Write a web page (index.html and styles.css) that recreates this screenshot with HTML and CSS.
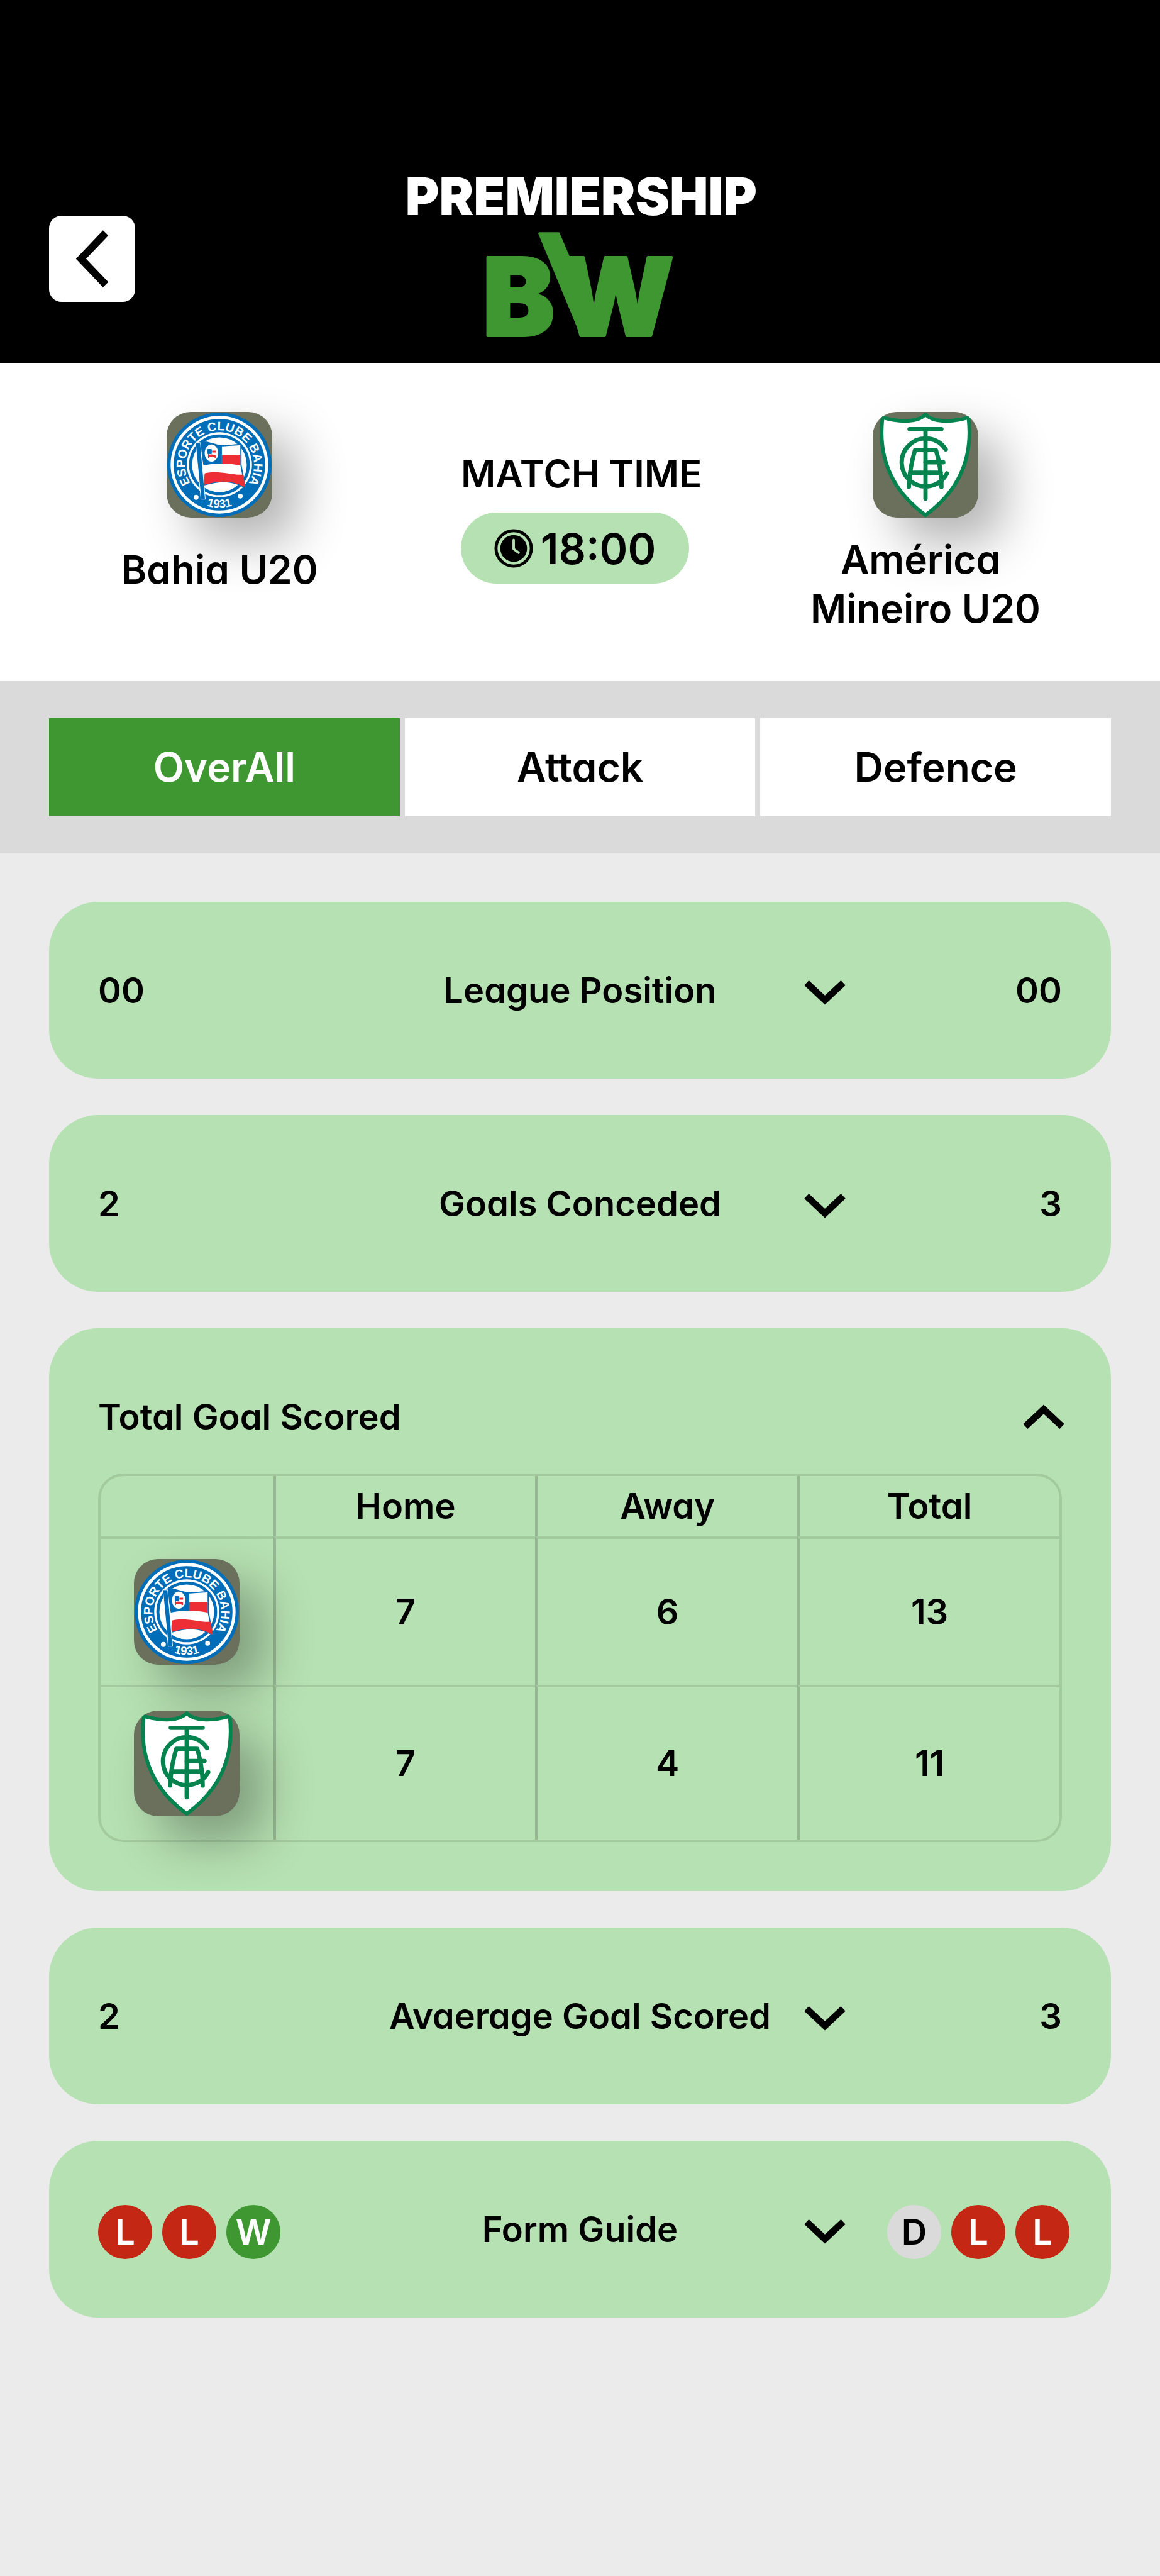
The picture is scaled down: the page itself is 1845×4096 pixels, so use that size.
FILE: index.html
```html
<!DOCTYPE html>
<html lang="en">
<head>
<meta charset="utf-8">
<meta name="viewport" content="width=device-width, initial-scale=1">
<title>Bahia U20 – América Mineiro U20</title>
<link rel="stylesheet" href="styles.css">
</head>
<body>
<svg class="sprite" aria-hidden="true">
  <symbol id="chevron" viewBox="0 0 68 40">
    <path d="M4 4L34 32L64 4" fill="none" stroke="currentColor" stroke-width="11"/>
  </symbol>
</svg>

<header class="header">
  <button class="back" type="button" aria-label="Back">
    <svg class="back__icon" viewBox="0 0 140 140" aria-hidden="true"><path d="M92 28L52 70L92 112" fill="none" stroke="#000" stroke-width="12"/></svg>
  </button>
  <svg class="logo" viewBox="646 268 600 324" role="img" aria-label="Premiership BW">
    <text class="logo__name" x="948" y="351" text-anchor="middle">PREMIERSHIP</text>
    <g class="logo__mark">
      <text x="787" y="548">B</text>
      <text x="909" y="548">W</text>
      <path d="M880 381H911L966 510L949 548Z"/>
    </g>
  </svg>
</header>

<main>
  <section class="match">
    <div class="team team--single">
      <svg class="crest" viewBox="0 0 172 172" role="img" aria-label="Bahia crest">
        <g id="bahia">
          <rect width="172" height="172" fill="#6b705c"/>
          <circle cx="86" cy="86" r="85" fill="#006db8"/>
          <circle cx="86" cy="86" r="77" fill="none" stroke="#fff" stroke-width="5"/>
          <circle cx="86" cy="86" r="53" fill="#fff"/>
          <circle cx="86" cy="86" r="47" fill="none" stroke="#006db8" stroke-width="5"/>
          <path id="ring-top" d="M86 142A56 56 0 1 1 86.1 142" fill="none"/>
          <path id="ring-bottom" d="M16 86A70 70 0 0 0 156 86" fill="none"/>
          <text class="crest-text" text-anchor="middle" font-size="20"><textPath href="#ring-top" startOffset="50%">ESPORTE CLUBE BAHIA</textPath></text>
          <text class="crest-text" text-anchor="middle" font-size="19"><textPath href="#ring-bottom" startOffset="50%">1931</textPath></text>
          <circle cx="48" cy="139" r="4" fill="#fff"/>
          <circle cx="120" cy="137" r="4" fill="#fff"/>
          <path d="M54 50C68 46 78 56 92 55S112 54 121 53L121 86L128 123C104 110 86 112 60 119Z" fill="#fff" stroke="#006db8" stroke-width="2"/>
          <path d="M54 50C68 46 78 56 90 55V84Q74 84 60 87Z" fill="#006db8"/>
          <path d="M90 70H120L120 87Q104 84 90 84Z" fill="#ee2e35"/>
          <path d="M62 100C84 94 104 103 125 102L128 123C104 110 86 112 60 119Z" fill="#ee2e35"/>
          <ellipse cx="73" cy="67" rx="11" ry="14" fill="#fff"/>
          <path d="M67 61h6v7h-6zM68 61v14" fill="#006db8" stroke="#006db8" stroke-width="1"/>
          <path d="M74 63h6v3h-6zM68 70q6-2 12 1v4q-6-3-12-1z" fill="#ee2e35"/>
          <path d="M47 50H55L63 142H56Z" fill="#006db8" stroke="#fff" stroke-width="1"/>
        </g>
      </svg>
      <span class="team__name">Bahia U20</span>
    </div>
    <div class="kickoff">
      <span class="kickoff__label">MATCH TIME</span>
      <span class="kickoff__time">
        <svg class="clock" viewBox="0 0 64 64" aria-hidden="true">
          <circle cx="32" cy="32" r="29" fill="none" stroke="#000" stroke-width="5"/>
          <circle cx="32" cy="32" r="22" fill="#000"/>
          <path d="M32 18V33L40 39" fill="none" stroke="#b6e1b2" stroke-width="4" stroke-linecap="round" stroke-linejoin="round"/>
        </svg>
        <time>18:00</time>
      </span>
    </div>
    <div class="team">
      <svg class="crest" viewBox="0 0 172 172" role="img" aria-label="América Mineiro crest">
        <g id="america">
          <rect width="172" height="172" fill="#6b705c"/>
          <path d="M86 4C97 16 125 18 156 9C162 60 152 120 86 168C20 120 10 60 16 9C47 18 75 16 86 4Z" fill="#fff" stroke="#05834f" stroke-width="6" stroke-linejoin="round"/>
          <g fill="none" stroke="#05834f" stroke-width="7" stroke-linecap="round" stroke-linejoin="round">
            <path d="M60 28H112M86 28V141"/>
            <path d="M119 61A39 39 0 1 0 121 100"/>
            <path d="M59 122Q60 92 69 62H103Q112 92 112 122M62 99H111M86 82H115"/>
          </g>
        </g>
      </svg>
      <span class="team__name">América&nbsp;<br>Mineiro U20</span>
    </div>
  </section>

  <nav class="tabs">
    <button class="tab tab--active" type="button">OverAll</button>
    <button class="tab" type="button">Attack</button>
    <button class="tab" type="button">Defence</button>
  </nav>

  <div class="cards">
    <section class="card row">
      <span>00</span>
      <h2 class="row__title">League Position</h2>
      <button class="toggle" type="button" aria-label="Show League Position"><svg class="chevron"><use href="#chevron"/></svg></button>
      <span class="row__away">00</span>
    </section>

    <section class="card row">
      <span>2</span>
      <h2 class="row__title">Goals Conceded</h2>
      <button class="toggle" type="button" aria-label="Show Goals Conceded"><svg class="chevron"><use href="#chevron"/></svg></button>
      <span class="row__away">3</span>
    </section>

    <section class="card">
      <div class="open-head">
        <h2 class="open-head__title">Total Goal Scored</h2>
        <button class="toggle toggle--open" type="button" aria-label="Hide Total Goal Scored"><svg class="chevron chevron--up"><use href="#chevron"/></svg></button>
      </div>
      <table class="goals">
        <colgroup><col class="goals__team"><col><col><col></colgroup>
        <thead>
          <tr><td></td><th scope="col">Home</th><th scope="col">Away</th><th scope="col">Total</th></tr>
        </thead>
        <tbody>
          <tr>
            <th scope="row"><svg class="crest" viewBox="0 0 172 172" role="img" aria-label="Bahia crest"><use href="#bahia"/></svg></th>
            <td>7</td><td>6</td><td>13</td>
          </tr>
          <tr>
            <th scope="row"><svg class="crest" viewBox="0 0 172 172" role="img" aria-label="América Mineiro crest"><use href="#america"/></svg></th>
            <td>7</td><td>4</td><td>11</td>
          </tr>
        </tbody>
      </table>
    </section>

    <section class="card row">
      <span>2</span>
      <h2 class="row__title">Avaerage Goal Scored</h2>
      <button class="toggle" type="button" aria-label="Show Avaerage Goal Scored"><svg class="chevron"><use href="#chevron"/></svg></button>
      <span class="row__away">3</span>
    </section>

    <section class="card row">
      <div class="form">
        <span class="result result--loss">L</span>
        <span class="result result--loss">L</span>
        <span class="result result--win">W</span>
      </div>
      <h2 class="row__title">Form Guide</h2>
      <button class="toggle" type="button" aria-label="Show Form Guide"><svg class="chevron"><use href="#chevron"/></svg></button>
      <div class="form form--away">
        <span class="result">D</span>
        <span class="result result--loss">L</span>
        <span class="result result--loss">L</span>
      </div>
    </section>
  </div>
</main>
</body>
</html>
```
FILE: styles.css
```css
:root {
  --green: #3f9732;
  --mint: #b6e1b2;
  --grey: #dadada;
  --red: #c42713;
  --line: rgba(0, 0, 0, 0.1);
}

* {
  box-sizing: border-box;
}

body {
  margin: 0;
  min-height: 100vh;
  background: #ebebeb;
  color: #000;
  font-family: Inter, "Liberation Sans", sans-serif;
  font-feature-settings: "cv11";
  font-weight: 600;
  font-size: 56px;
  line-height: 78px;
}

button {
  margin: 0;
  padding: 0;
  border: 0;
  background: none;
  color: inherit;
  font: inherit;
  font-feature-settings: inherit;
  cursor: pointer;
}

h2 {
  margin: 0;
  font: inherit;
}

svg {
  display: block;
}

.sprite {
  position: absolute;
  width: 0;
  height: 0;
}

/* Header */
.header {
  display: grid;
  grid-template-columns: 1fr auto 1fr;
  align-items: start;
  padding: 261px 78px 0;
  background: #000;
}

.back {
  width: 137px;
  height: 137px;
  margin-top: 82px;
  border-radius: 20px;
  background: #fff;
}

.back__icon {
  width: 137px;
  height: 137px;
}

.logo {
  width: 585px;
  height: 316px;
}

.logo__name {
  font-size: 84px;
  font-weight: 900;
  fill: #fff;
}

.logo__mark {
  font-size: 176px;
  font-weight: 900;
  fill: var(--green);
  stroke: var(--green);
  stroke-width: 4px;
  stroke-linejoin: round;
}

/* Match summary */
.match {
  display: grid;
  grid-template-columns: minmax(0, 698fr) minmax(0, 401fr) minmax(0, 746fr);
  padding: 78px 0 76px;
  background: #fff;
  font-size: 62px;
}

.team {
  display: flex;
  flex-direction: column;
  align-items: center;
  gap: 28px;
  text-align: center;
}

.team--single {
  gap: 44px;
}

.crest {
  width: 168px;
  height: 168px;
  border-radius: 38px;
  box-shadow: 39px 39px 78px rgba(0, 0, 0, 0.3);
}

.crest-text {
  font-family: "Liberation Sans", sans-serif;
  font-weight: 700;
  fill: #fff;
}

.kickoff {
  display: flex;
  flex-direction: column;
  align-items: flex-start;
  gap: 23px;
  padding: 59px 0 0 35px;
  white-space: nowrap;
}

.kickoff__label {
  font-size: 60px;
}

.kickoff__time {
  display: flex;
  align-items: center;
  justify-content: center;
  gap: 12px;
  width: 363px;
  height: 113px;
  border-radius: 57px;
  background: var(--mint);
  font-size: 68px;
}

.clock {
  width: 62px;
  height: 62px;
}

/* Tabs */
.tabs {
  display: flex;
  gap: 8px;
  padding: 59px 78px 58px;
  background: var(--grey);
}

.tab {
  flex: 1;
  padding: 39px 0;
  background: #fff;
  font-size: 64px;
}

.tab--active {
  background: var(--green);
  color: #fff;
}

/* Cards */
.cards {
  display: flex;
  flex-direction: column;
  gap: 58px;
  padding: 78px;
}

.card {
  padding: 78px;
  border-radius: 78px;
  background: var(--mint);
}

.row {
  display: grid;
  grid-template-columns: minmax(0, 423fr) minmax(0, 687fr) minmax(0, 92fr) minmax(0, 331fr);
  grid-template-rows: 125px;
  align-items: center;
}

.row__title {
  text-align: center;
  white-space: nowrap;
}

.row__away {
  text-align: right;
}

.toggle {
  justify-self: center;
  padding-top: 8px;
}

.toggle--open {
  margin-right: -4px;
  padding: 0;
}

.chevron {
  width: 66px;
  height: 39px;
}

.chevron--up {
  transform: rotate(180deg);
}

.open-head {
  display: flex;
  align-items: center;
  justify-content: space-between;
  height: 125px;
  margin-bottom: 28px;
}

/* Goals table */
.goals {
  width: 100%;
  table-layout: fixed;
  border: 4px solid var(--line);
  border-radius: 40px;
  border-spacing: 0;
  text-align: center;
}

.goals__team {
  width: 18%;
}

.goals td,
.goals th {
  height: 236px;
  padding: 0;
  font-weight: 600;
}

.goals thead td,
.goals thead th {
  height: 96px;
}

.goals tbody tr:last-child > * {
  height: 246px;
}

.goals tr > * + * {
  border-left: 4px solid rgba(0, 0, 0, 0.18);
}

.goals tbody tr > * {
  border-top: 4px solid var(--line);
}

.goals .crest {
  margin: 0 auto;
}

/* Form guide */
.form {
  display: flex;
  gap: 16px;
  padding-top: 8px;
}

.form--away {
  justify-content: flex-end;
  margin-right: -12px;
}

.result {
  width: 86px;
  height: 86px;
  border-radius: 50%;
  background: var(--grey);
  line-height: 86px;
  text-align: center;
}

.result--loss {
  background: var(--red);
  color: #fff;
}

.result--win {
  background: var(--green);
  color: #fff;
}
```
